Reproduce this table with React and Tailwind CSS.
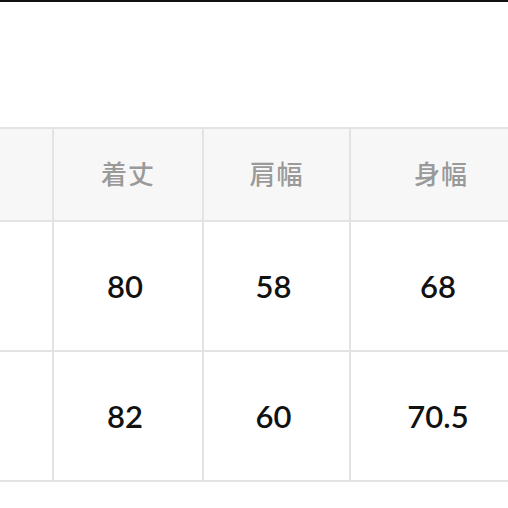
export default function App() {
  const head = ["", "着丈", "肩幅", "身幅"];
  const rows = [
    ["", "80", "58", "68"],
    ["", "82", "60", "70.5"],
  ];
  return (
    <div className="w-[508px] h-[508px] bg-white overflow-hidden">
      <div className="h-[2px] bg-[#111111]" />
      <div className="h-[125px]" />
      <div className="w-[540px] bg-[#e3e3e3] py-[2px]">
        <div className="grid grid-cols-[52px_148px_145px_180px] gap-[2px]">
          {head.map((h, i) => (
            <div
              key={"h" + i}
              className="h-[91px] bg-[#f7f7f7] flex items-center justify-center pb-[5px] text-[26px] font-medium text-[#9a9a9a] tracking-[1px]"
              style={{ fontFamily: '"Noto Sans CJK JP", "Noto Sans", sans-serif' }}
            >
              {h}
            </div>
          ))}
          {rows.flat().map((v, i) => (
            <div
              key={"r" + i}
              className="h-[128px] bg-white flex items-center justify-center text-[31px] font-semibold text-[#111111] pr-[6px]"
              style={{ fontFamily: 'Lato, "Noto Sans", sans-serif' }}
            >
              {v}
            </div>
          ))}
        </div>
      </div>
    </div>
  );
}
